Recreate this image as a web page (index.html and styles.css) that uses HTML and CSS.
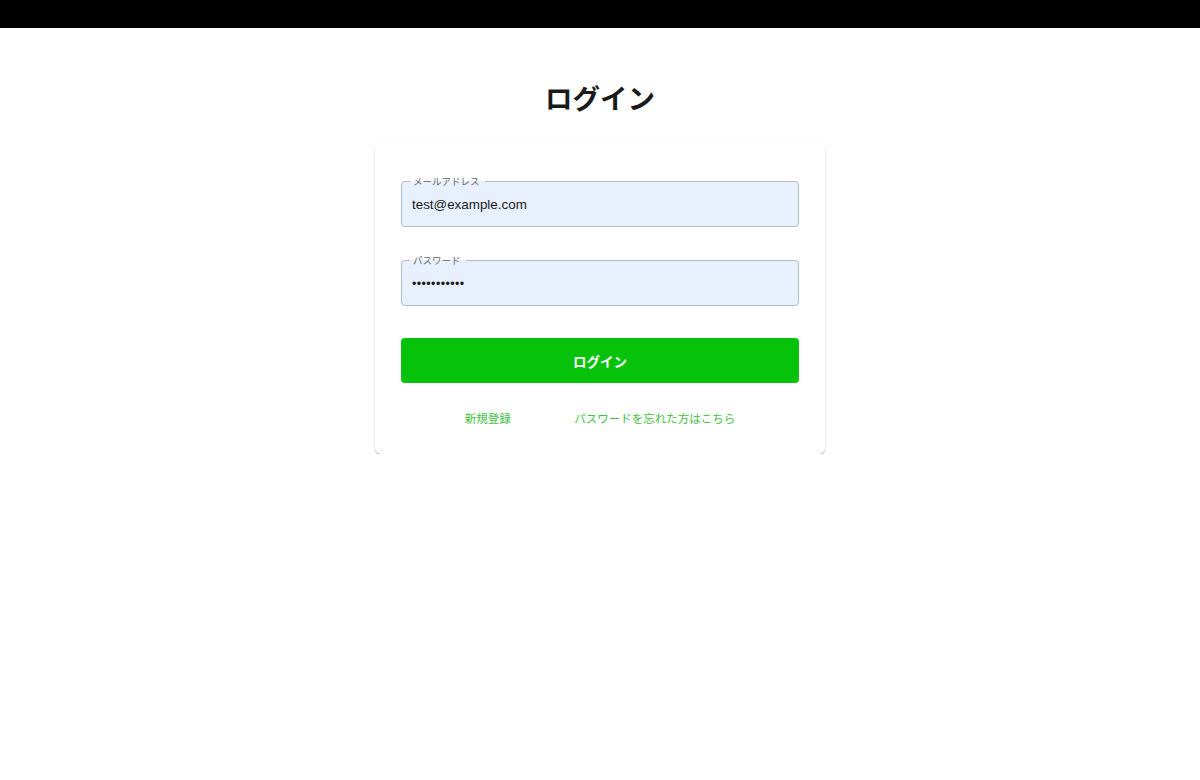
FILE: index.html
```html
<!DOCTYPE html>
<html lang="ja">
<head>
<meta charset="utf-8">
<title>ログイン</title>
<link rel="stylesheet" href="styles.css">
</head>
<body>
<div class="topbar"></div>
<main class="main">
  <h1 class="title">ログイン</h1>
  <div class="card">
    <fieldset class="field">
      <legend class="legend">メールアドレス</legend>
      <input class="input" type="email" value="test@example.com" readonly>
    </fieldset>
    <fieldset class="field">
      <legend class="legend">パスワード</legend>
      <input class="input pw" type="password" value="password123" readonly>
    </fieldset>
    <button class="btn" type="button">ログイン</button>
    <div class="links">
      <a class="link" href="#">新規登録</a>
      <a class="link" href="#">パスワードを忘れた方はこちら</a>
    </div>
  </div>
</main>
</body>
</html>
```

FILE: styles.css
```css
* { box-sizing: border-box; }
html, body { margin: 0; padding: 0; background: #fff; }
body {
  font-family: "Liberation Sans", "Noto Sans CJK JP", sans-serif;
  color: #1a1a1a;
}
.topbar { height: 28px; background: #000; }
.main {
  display: flex;
  flex-direction: column;
  align-items: center;
  padding-top: 49px;
}
.title {
  margin: 0 0 26px;
  font-family: "Noto Sans CJK JP", sans-serif;
  font-size: 27.5px;
  line-height: 40px;
  font-weight: 700;
  color: #1a1a1a;
}
.card {
  width: 450px;
  background: #fff;
  border-radius: 6px;
  padding: 32px 26px 28px;
  box-shadow: 0 2px 2px -1px rgba(0,0,0,0.25), 0 1px 1px 0 rgba(0,0,0,0.12), 0 1px 3px 0 rgba(0,0,0,0.1);
  display: flex;
  flex-direction: column;
}
.field {
  margin: 0 0 27px;
  padding: 0 10px;
  border: 1px solid #b3bccb;
  border-radius: 4px;
  background: #e8f0fe;
  height: 52px;
}
.legend {
  padding: 0 5px 0 3px;
  margin-left: -2px;
  font-family: "Noto Sans CJK JP", sans-serif;
  font-size: 9.5px;
  line-height: 12px;
  color: #666;
}
.input {
  display: block;
  width: 100%;
  border: 0;
  outline: 0;
  background: transparent;
  padding: 5px 0 0;
  margin: 0;
  font-family: "Liberation Sans", "Noto Sans CJK JP", sans-serif;
  font-size: 13.4px;
  color: #1a1a1a;
  height: 30px;
}
.pw { font-size: 12.5px; letter-spacing: 0.4px; }
.btn {
  margin-top: 5px;
  height: 45px;
  border: 0;
  border-radius: 4px;
  background: #06c20a;
  color: #fff;
  font-family: "Noto Sans CJK JP", sans-serif;
  font-size: 13.5px;
  font-weight: 700;
}
.links {
  margin-top: 27px;
  display: flex;
  justify-content: space-evenly;
}
.link {
  font-family: "Noto Sans CJK JP", sans-serif;
  font-size: 11.5px;
  line-height: 16px;
  color: #3ec23e;
  text-decoration: none;
}
```
